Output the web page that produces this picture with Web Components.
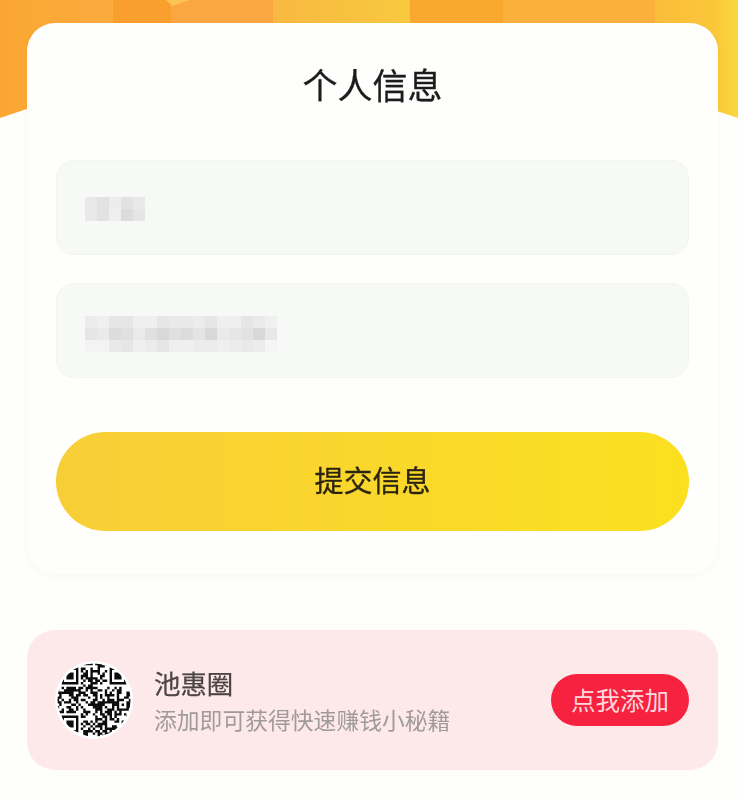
<!DOCTYPE html>
<html lang="zh-CN">
<head>
<meta charset="utf-8">
<title>个人信息</title>
<style>
html,body{margin:0;padding:0;background:#fefefc;font-family:"Noto Sans CJK SC","Liberation Sans",sans-serif;}
</style>
</head>
<body>
<app-page>
  <hero-banner slot="bg"></hero-banner>
  <info-card>
    <span slot="title">个人信息</span>
    <text-field style="--shift:3px" cells="e9,e2,ec,e2,e9|e9,e2,ef,dc,e5"></text-field>
    <text-field style="--shift:6px" cells="ec,ef,e6,e6,ef,ef,e6,e9,e9,ec,e6,ef,ef,e6,ea,f0|e6,ea,dc,e0,ea,e0,d8,e0,dc,e4,d8,ea,e6,e2,d8,e8|f3,f3,e9,e6,ef,ec,e6,ef,ef,ec,ec,ef,ec,e9,ec,f5"></text-field>
    <submit-button>提交信息</submit-button>
  </info-card>
  <promo-card>
    <qr-avatar slot="avatar"></qr-avatar>
    <span slot="name">池惠圈</span>
    <span slot="desc">添加即可获得快速赚钱小秘籍</span>
    <span slot="action">点我添加</span>
  </promo-card>
</app-page>
<script>
function define(name, html, setup){
  customElements.define(name, class extends HTMLElement{
    constructor(){
      super();
      const root=this.attachShadow({mode:"open"});
      root.innerHTML=html;
    }
    connectedCallback(){ if(setup) setup(this,this.shadowRoot); }
  });
}

define("app-page",`<style>
:host{display:grid;width:738px;height:799px;overflow:hidden;background:#fefefc;color:#1c1c1c;
  font-family:"Noto Sans CJK SC","Liberation Sans",sans-serif;}
.bg{grid-area:1/1;z-index:0;}
.fg{grid-area:1/1;z-index:1;display:flex;flex-direction:column;gap:56px;padding:23px 20px 0 27px;min-width:0;}
</style>
<div class="bg"><slot name="bg"></slot></div>
<div class="fg"><slot></slot></div>`);

define("hero-banner",`<style>
:host{display:block;height:125px;}
svg{display:block;filter:blur(.5px);}
</style>
<svg width="738" height="125" viewBox="0 0 738 125">
  <defs>
    <linearGradient id="e" x1="0" x2="1" y1="0" y2="0"><stop offset="0" stop-color="#fbbd3a"/><stop offset=".7" stop-color="#fbc63a"/><stop offset="1" stop-color="#f9d83c"/></linearGradient>
    <linearGradient id="a" x1="0" x2="1" y1="0" y2="0"><stop offset="0" stop-color="#fba632"/><stop offset="1" stop-color="#fbac3e"/></linearGradient>
    <linearGradient id="d" x1="0" x2="1" y1="0" y2="0"><stop offset="0" stop-color="#f8b940"/><stop offset="1" stop-color="#f8c93f"/></linearGradient>
  </defs>
  <rect x="0" y="0" width="114" height="125" fill="url(#a)"/>
  <rect x="113" y="0" width="59" height="125" fill="#f99f2d"/>
  <rect x="171" y="0" width="103" height="125" fill="#fba640"/>
  <rect x="273" y="0" width="138" height="125" fill="url(#d)"/>
  <rect x="410" y="0" width="94" height="125" fill="#f9a930"/>
  <rect x="503" y="0" width="153" height="125" fill="#fbb03c"/>
  <rect x="655" y="0" width="83" height="125" fill="url(#e)"/>
  <path d="M166 0 L172 6 L190 0 Z" fill="#fcc254"/>
  <path d="M0 118 Q369 -11 738 118 V125 H0 Z" fill="#fefefc"/>
</svg>`);

define("info-card",`<style>
:host{display:block;box-sizing:border-box;width:691px;height:551px;background:#fefefc;border-radius:28px;
  padding:0 29px;box-shadow:0 3px 8px rgba(0,0,0,.025),0 0 6px rgba(0,0,0,.012);}
h1{margin:0;height:137px;box-sizing:border-box;padding-top:35px;text-align:center;font-weight:400;font-size:35px;line-height:52px;color:#1c1c1c;filter:blur(.35px);-webkit-text-stroke:.3px #1c1c1c;}
.fields{display:flex;flex-direction:column;gap:28px;}
</style>
<h1><slot name="title"></slot></h1>
<div class="fields"><slot></slot></div>`);

define("text-field",`<style>
:host{display:flex;align-items:center;box-sizing:border-box;width:633px;height:95px;padding-left:28px;padding-top:var(--shift,0);background:#f7f9f7;
  border:1px solid #f3f5f2;border-radius:18px;}
.mask{display:grid;grid-auto-rows:12px;grid-auto-columns:12px;filter:blur(.6px);}
i{display:block;}
</style>
<div class="mask"></div>`,(el,root)=>{
  const mask=root.querySelector(".mask");
  if(mask.children.length) return;
  el.getAttribute("cells").split("|").forEach((row,r)=>{
    row.split(",").forEach((v,c)=>{
      const i=document.createElement("i");
      i.style.gridRow=r+1;i.style.gridColumn=c+1;i.style.background="#"+v+v+v;
      mask.appendChild(i);
    });
  });
});

define("submit-button",`<style>
:host{display:flex;align-items:center;justify-content:center;box-sizing:border-box;width:633px;height:99px;margin-top:26px;padding-bottom:6px;
  border-radius:50px;background:linear-gradient(90deg,#f8ce38,#fbe01f);
  font-size:29px;line-height:40px;color:#2a2410;cursor:pointer;}
span{filter:blur(.3px);-webkit-text-stroke:.3px #2a2410;}
</style>
<span><slot></slot></span>`);

define("promo-card",`<style>
:host{display:flex;align-items:center;box-sizing:border-box;width:691px;height:140px;padding:0 29px 0 28px;background:#fee9ea;border-radius:28px;}
.text{flex:1;display:flex;flex-direction:column;gap:3px;margin-left:21px;min-width:0;filter:blur(.3px);}
.name{font-size:26.4px;line-height:36px;color:#4a4444;-webkit-text-stroke:.25px #4a4444;}
.desc{font-size:22.8px;line-height:32px;color:#a09a9a;white-space:nowrap;}
.action{display:flex;align-items:center;justify-content:center;width:138px;height:52px;border-radius:26px;background:#f7223f;color:#fdd9dd;font-size:24.5px;line-height:34px;white-space:nowrap;}
</style>
<slot name="avatar"></slot>
<div class="text"><div class="name"><slot name="name"></slot></div><div class="desc"><slot name="desc"></slot></div></div>
<div class="action"><slot name="action"></slot></div>`);

define("qr-avatar",`<style>
:host{display:block;width:78px;height:78px;border-radius:50%;background:#fff;flex:none;filter:blur(.4px);}
svg{display:block;}
</style>
<svg width="78" height="78" viewBox="0 0 78 78"><clipPath id="c"><circle cx="39" cy="39" r="36.5"/></clipPath><path fill="#0c0c0c" clip-path="url(#c)"></path></svg>`,(el,root)=>{
  const n=31,s=2.4,o=1.8;
  let seed=4211,d="";
  const rnd=()=>{seed=(seed*1103515245+12345)&0x7fffffff;return (seed>>>8)/(0x7fffffff>>>8);};
  const finder=(x,y)=>{
    const m=Math.max(Math.abs(x-3),Math.abs(y-3));
    return m===3||m<=1;
  };
  for(let y=0;y<n;y++)for(let x=0;x<n;x++){
    let on=rnd()>.5;
    for(const [fx,fy] of [[2,2],[n-9,2],[2,n-9]]){
      if(x>=fx-1&&x<fx+8&&y>=fy-1&&y<fy+8) on=x>=fx&&x<fx+7&&y>=fy&&y<fy+7&&finder(x-fx,y-fy);
    }
    if(on) d+=`M${(o+x*s).toFixed(1)} ${(o+y*s).toFixed(1)}h${s}v${s}h-${s}z`;
  }
  root.querySelector("path").setAttribute("d",d);
});
</script>
</body>
</html>
